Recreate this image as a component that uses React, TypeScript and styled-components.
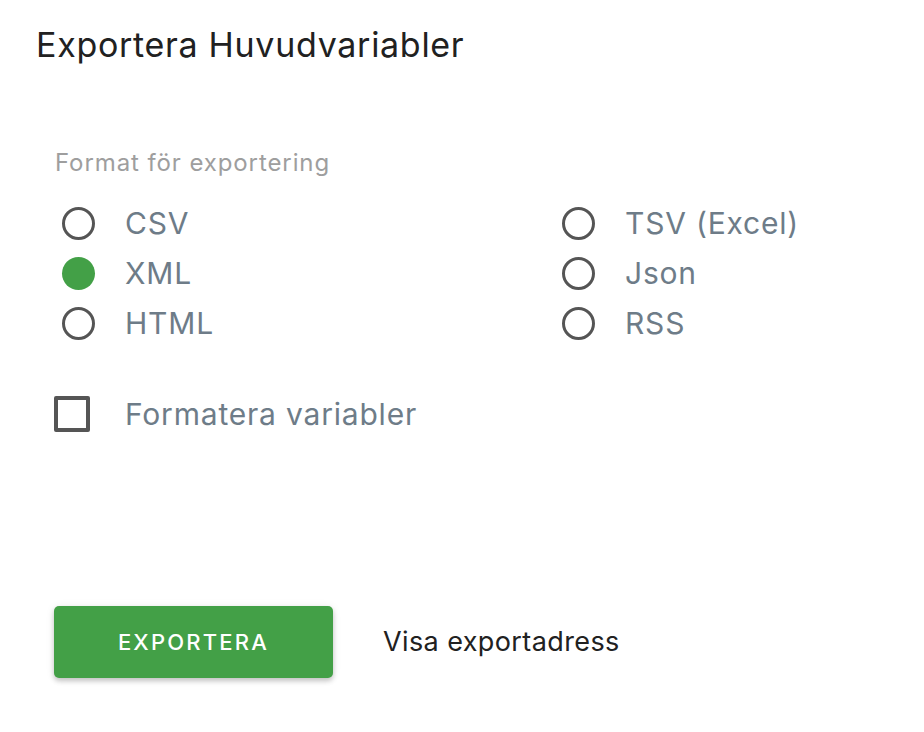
import React from "react";
import styled, { createGlobalStyle } from "styled-components";

const Global = createGlobalStyle`
  html, body { margin: 0; padding: 0; background: #ffffff; }
  body { font-family: Inter, Roboto, "Liberation Sans", sans-serif; }
`;

const Page = styled.div`
  width: 924px;
  height: 732px;
  box-sizing: border-box;
  padding: 25px 0 0 36px;
  display: flex;
  flex-direction: column;
`;

const Title = styled.h1`
  margin: 0;
  font-size: 34px;
  line-height: 40px;
  font-weight: 400;
  letter-spacing: 0.7px;
  color: #212121;
`;

const Body = styled.div`
  margin-top: 85px;
  padding-left: 18px;
  display: flex;
  flex-direction: column;
`;

const Legend = styled.div`
  font-size: 24px;
  line-height: 26px;
  letter-spacing: 0.9px;
  color: #9e9e9e;
  margin-left: 1px;
`;

const RadioGrid = styled.div`
  margin-top: 22px;
  display: grid;
  grid-template-columns: 500px 300px;
  grid-auto-flow: column;
  grid-template-rows: repeat(3, 50px);
`;

const Option = styled.label`
  display: flex;
  align-items: center;
  gap: 23px;
  height: 50px;
`;

const RadioBox = styled.span`
  width: 48px;
  height: 50px;
  display: flex;
  align-items: center;
  justify-content: center;
`;

const RadioCircle = styled.span<{ $checked?: boolean }>`
  width: 33px;
  height: 33px;
  box-sizing: border-box;
  border-radius: 50%;
  border: ${(p) => (p.$checked ? "none" : "3.5px solid #555555")};
  background: ${(p) => (p.$checked ? "#43a047" : "transparent")};
`;

const OptionText = styled.span`
  font-size: 30px;
  line-height: 34px;
  letter-spacing: 0.8px;
  color: #6e7c88;
`;

const CheckRow = styled.label`
  margin-top: 41px;
  display: flex;
  align-items: center;
  gap: 35px;
  height: 50px;
`;

const CheckSquare = styled.span`
  width: 36px;
  height: 36px;
  box-sizing: border-box;
  border: 4px solid #555555;
  border-radius: 2px;
`;

const Actions = styled.div`
  margin-top: 167px;
  display: flex;
  align-items: center;
  gap: 50px;
`;

const ExportButton = styled.button`
  width: 279px;
  height: 72px;
  border: none;
  border-radius: 5px;
  background: #43a047;
  color: #ffffff;
  font-family: Inter, Roboto, "Liberation Sans", sans-serif;
  font-size: 22px;
  font-weight: 500;
  letter-spacing: 2.2px;
  box-shadow: 0 3px 5px rgba(0, 0, 0, 0.2), 0 1px 10px rgba(0, 0, 0, 0.08);
  cursor: pointer;
`;

const LinkText = styled.span`
  font-size: 27px;
  line-height: 32px;
  letter-spacing: 0.4px;
  color: #212121;
`;

const options = [
  { label: "CSV", checked: false },
  { label: "XML", checked: true },
  { label: "HTML", checked: false },
  { label: "TSV (Excel)", checked: false },
  { label: "Json", checked: false },
  { label: "RSS", checked: false },
];

export default function App() {
  return (
    <>
      <Global />
      <Page>
        <Title>Exportera Huvudvariabler</Title>
        <Body>
          <Legend>Format för exportering</Legend>
          <RadioGrid>
            {options.map((o) => (
              <Option key={o.label}>
                <RadioBox>
                  <RadioCircle $checked={o.checked} />
                </RadioBox>
                <OptionText>{o.label}</OptionText>
              </Option>
            ))}
          </RadioGrid>
          <CheckRow>
            <CheckSquare />
            <OptionText>Formatera variabler</OptionText>
          </CheckRow>
          <Actions>
            <ExportButton>EXPORTERA</ExportButton>
            <LinkText>Visa exportadress</LinkText>
          </Actions>
        </Body>
      </Page>
    </>
  );
}
